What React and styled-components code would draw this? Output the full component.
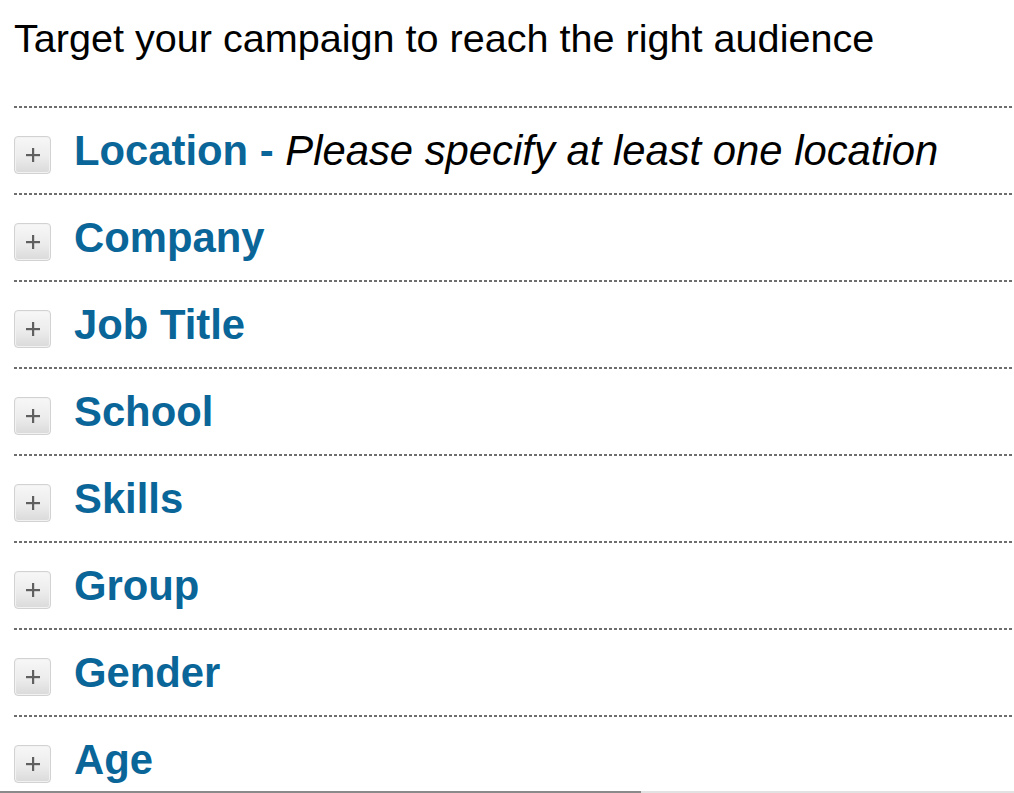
import React from "react";
import styled, { createGlobalStyle } from "styled-components";

const Global = createGlobalStyle`
  html, body { margin: 0; padding: 0; background: #fff; overflow: hidden; }
  body { font-family: "Liberation Sans", Arial, sans-serif; }
`;

const Page = styled.div`
  height: 793px;
  width: 1014px;
  display: flex;
  flex-direction: column;
  overflow: hidden;
  background: #fff;
`;

const Content = styled.div`
  flex: 1;
  min-height: 0;
  overflow: hidden;
  padding-left: 14px;
`;

const Title = styled.h1`
  margin: 15px 0 45px;
  font-size: 39.6px;
  line-height: 46px;
  font-weight: normal;
  color: #000;
  white-space: nowrap;
`;

const List = styled.div`
  display: flex;
  flex-direction: column;
`;

const Divider = styled.div`
  height: 2px;
  background-image: repeating-linear-gradient(
    to right,
    #6e6e6e 0,
    #6e6e6e 3px,
    transparent 3px,
    transparent 5px
  );
`;

const Row = styled.div`
  display: flex;
  align-items: flex-start;
  gap: 23px;
  height: 85px;
  box-sizing: border-box;
  padding-top: 19px;
`;

const ExpandBox = styled.span`
  flex: none;
  width: 37px;
  height: 38px;
  margin-top: 9px;
  box-sizing: border-box;
  border: 1px solid #d2d2d2;
  border-radius: 4px;
  background: linear-gradient(to bottom, #f7f7f7 0%, #ececec 55%, #dadada 100%);
  box-shadow: inset 0 0 0 1px #f2f2f2;
  display: flex;
  align-items: center;
  justify-content: center;
`;

const Heading = styled.h2`
  margin: 0;
  font-size: 41.8px;
  line-height: 48px;
  font-weight: bold;
  color: #0a6598;
  white-space: nowrap;
`;

const Note = styled.span`
  font-weight: normal;
  font-style: italic;
  color: #000;
`;

const BottomBar = styled.div`
  flex: none;
  height: 2px;
  display: flex;
`;

const BarSegment = styled.div`
  height: 2px;
  width: ${(p) => p.$w};
  flex: ${(p) => (p.$grow ? 1 : "none")};
  background: ${(p) => p.$color};
`;

const PlusIcon = () => (
  <svg width="16" height="16" viewBox="0 0 16 16">
    <rect x="7" y="1" width="2.2" height="14" fill="#606060" />
    <rect x="1" y="7" width="14" height="2.2" fill="#606060" />
  </svg>
);

const sections = [
  { label: "Location", note: "Please specify at least one location" },
  { label: "Company" },
  { label: "Job Title" },
  { label: "School" },
  { label: "Skills" },
  { label: "Group" },
  { label: "Gender" },
  { label: "Age" },
];

export default function App() {
  return (
    <>
      <Global />
      <Page>
        <Content>
          <Title>Target your campaign to reach the right audience</Title>
          <List>
            {sections.map((s) => (
              <React.Fragment key={s.label}>
                <Divider />
                <Row>
                  <ExpandBox>
                    <PlusIcon />
                  </ExpandBox>
                  <Heading>
                    {s.label}
                    {s.note && (
                      <>
                        {" - "}
                        <Note>{s.note}</Note>
                      </>
                    )}
                  </Heading>
                </Row>
              </React.Fragment>
            ))}
          </List>
        </Content>
        <BottomBar>
          <BarSegment $w="641px" $color="#8a8a8a" />
          <BarSegment $grow $color="#e2e2e2" />
        </BottomBar>
      </Page>
    </>
  );
}
